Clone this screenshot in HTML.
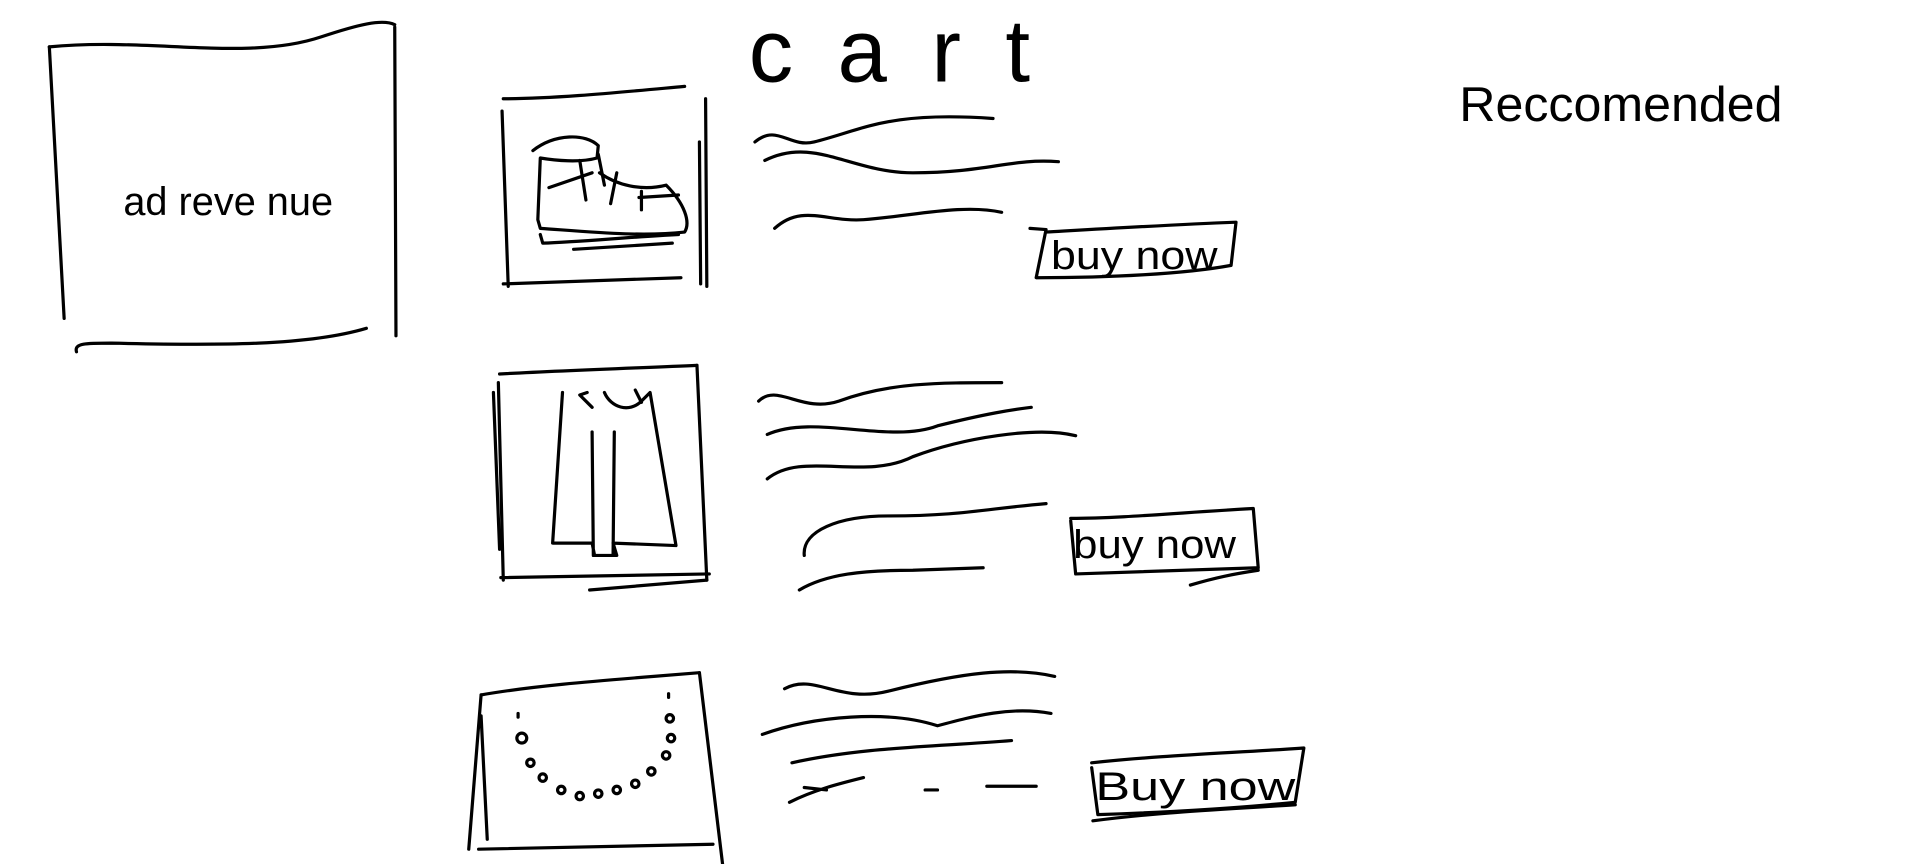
<!DOCTYPE html>
<html><head><meta charset="utf-8"><style>
html,body{margin:0;padding:0;background:#fff;width:1912px;height:864px;overflow:hidden}
svg{display:block}
text{font-family:"Liberation Sans",sans-serif;fill:#000}
</style></head><body>
<svg width="1912" height="864" viewBox="0 0 1550 700" preserveAspectRatio="none" fill="none" stroke="#000" stroke-width="2.6" stroke-linecap="round" stroke-linejoin="round">
<!-- ad box -->
<path d="M40 38 L52 258"/>
<path d="M40 38 C120 30 200 50 260 30 C290 20 310 15 320 20"/>
<path d="M320 22 L321 272"/>
<path d="M62 285 C60 278 70 278 90 278 C180 280 250 280 297 266"/>
<text x="100" y="174" font-size="32" stroke="none" textLength="170" lengthAdjust="spacingAndGlyphs">ad reve nue</text>
<text x="607" y="66" font-size="72" stroke="none" textLength="228">cart</text>
<text x="1183" y="98" font-size="40" stroke="none" textLength="262" lengthAdjust="spacingAndGlyphs">Reccomended</text>

<!-- item 1 -->
<path d="M408 80 C450 80 500 75 555 70"/>
<path d="M407 90 L412 232"/>
<path d="M408 230 L552 225"/>
<path d="M567 115 L568 230"/>
<path d="M572 80 L573 232"/>
<path d="M432 122 C450 108 475 108 485 118 L484 128 C470 132 450 130 438 128 L436 178 L438 185 C480 188 520 192 555 188 C560 180 555 165 540 150 C520 155 500 150 486 140"/>
<path d="M438 190 L440 197 C470 196 510 192 550 190"/>
<path d="M465 202 L545 197"/>
<path d="M445 152 L480 140 M470 130 L475 162 M485 125 L490 150 M500 140 L495 165 M520 155 L520 170 M518 160 L550 158"/>
<path d="M612 115 C630 100 640 120 660 115 C700 105 720 90 805 96"/>
<path d="M620 130 C660 110 690 140 740 140 C800 140 820 128 858 131"/>
<path d="M628 185 C650 165 670 180 700 178 C740 175 780 165 812 172"/>
<path d="M835 185 L848 186 L840 225 C900 225 960 222 998 215 M848 188 C900 185 950 182 1002 180 L998 215"/>
<text x="852" y="218" font-size="32" stroke="none" textLength="135" lengthAdjust="spacingAndGlyphs">buy now</text>

<!-- item 2 -->
<path d="M405 303 C460 300 520 298 565 296"/>
<path d="M400 318 L405 445 M404 310 L408 470"/>
<path d="M565 296 L573 470"/>
<path d="M406 468 L575 465 M478 478 L573 470"/>
<path d="M456 318 L448 440 L480 440 L482 450 L500 450 L497 440 L548 442 L527 318 L520 325 C510 335 495 330 490 318 M476 318 L470 320 L480 330 M515 316 L520 326 M480 350 L481 450 M498 350 L497 450"/>
<path d="M615 325 C630 310 650 335 680 325 C720 310 760 310 812 310"/>
<path d="M622 352 C660 335 720 360 760 345 C800 335 820 332 836 330"/>
<path d="M622 388 C650 365 700 390 740 370 C780 355 840 345 872 353"/>
<path d="M652 450 C650 430 680 418 720 418 C780 418 800 412 848 408"/>
<path d="M648 478 C670 465 700 462 740 462 L797 460"/>
<path d="M868 422 L872 465 C920 463 970 462 1020 460 L1016 412 C960 415 910 420 868 420"/>
<path d="M965 474 C985 468 1000 465 1020 462"/>
<text x="870" y="452" font-size="32" stroke="none" textLength="132" lengthAdjust="spacingAndGlyphs">buy now</text>

<!-- item 3 -->
<path d="M390 563 C430 556 480 552 530 548 L567 545"/>
<path d="M390 563 L380 688 M390 580 L395 680"/>
<path d="M567 545 L586 702"/>
<path d="M388 688 L578 684"/>
<circle cx="423" cy="598" r="4"/>
<path d="M420 578 l0 3 M542 562 l0 3"/>
<circle cx="430" cy="618" r="3"/><circle cx="440" cy="630" r="3"/><circle cx="455" cy="640" r="3"/>
<circle cx="470" cy="645" r="3"/><circle cx="485" cy="643" r="3"/><circle cx="500" cy="640" r="3"/>
<circle cx="515" cy="635" r="3"/><circle cx="528" cy="625" r="3"/><circle cx="540" cy="612" r="3"/>
<circle cx="544" cy="598" r="3"/><circle cx="543" cy="582" r="3"/>
<path d="M636 558 C660 545 680 570 720 560 C780 545 820 540 855 548"/>
<path d="M618 595 C660 580 720 575 760 588 C790 580 820 572 852 578"/>
<path d="M642 618 C700 605 760 605 820 600"/>
<path d="M640 650 C660 640 680 635 700 630 M652 638 L670 640 M750 640 L760 640 M800 637 L840 637"/>
<path d="M885 622 L890 660 C950 658 1000 655 1050 650 L1057 606 C1000 610 940 612 885 618"/>
<path d="M886 665 C940 658 990 656 1050 652"/>
<text x="888" y="648" font-size="32" stroke="none" textLength="162" lengthAdjust="spacingAndGlyphs">Buy now</text>
</svg>
</body></html>
